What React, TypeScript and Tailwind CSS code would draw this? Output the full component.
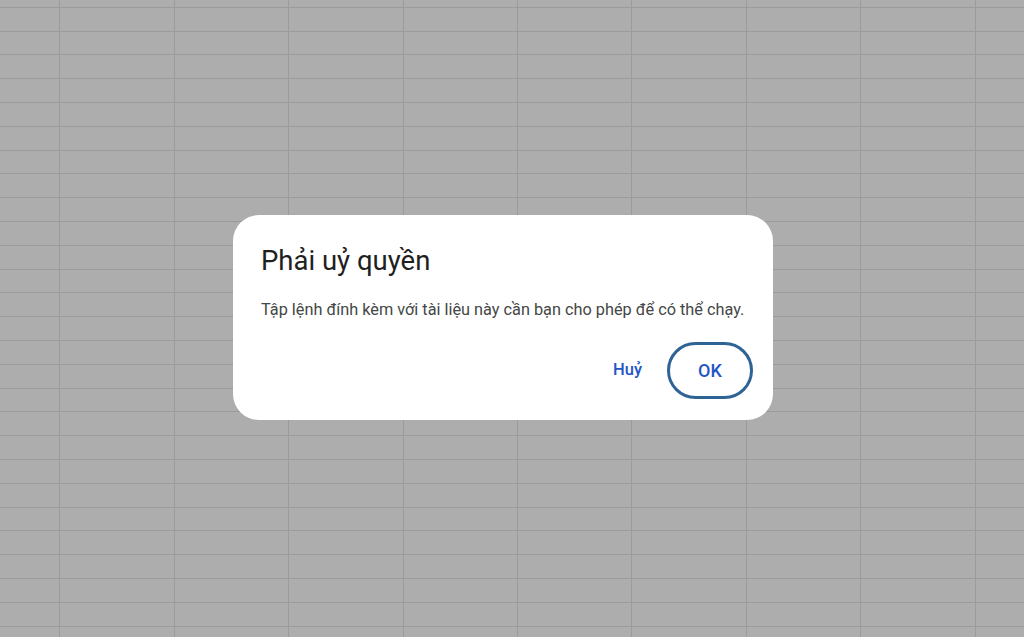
const COLS = 10;
const ROWS = 28;

function SheetGrid() {
  // lưới bảng tính mờ phía sau hộp thoại
  return (
    <div className="absolute inset-0 overflow-hidden bg-[#adadad]">
      <div className="ml-[-54px] mt-[-16px] flex flex-col">
        {Array.from({ length: ROWS }, (_, r) => (
          <div key={r} className="flex h-[23.8px] shrink-0">
            {Array.from({ length: COLS }, (_, c) => (
              <div
                key={c}
                className="h-full w-[114.4px] shrink-0 border-b-[1.5px] border-r-[1.5px] border-[#9b9b9b]"
              />
            ))}
          </div>
        ))}
      </div>
    </div>
  );
}

export default function App() {
  return (
    <div className="relative h-[637px] w-[1024px] overflow-hidden font-['Roboto','Noto_Sans',sans-serif]">
      <SheetGrid />
      <div className="relative h-full w-full pl-[233px] pt-[215px]">
        <div
          role="dialog"
          aria-labelledby="auth-title"
          className="w-[540px] rounded-[26px] bg-white pl-[28px] pr-[20px] pt-[29px] pb-[21px]"
        >
          <h2 id="auth-title" className="text-[27.5px] leading-[34px] text-[#1f1f1f]">
            Phải uỷ quyền
          </h2>
          <p className="mt-[21px] text-[16.3px] leading-[22px] text-[#444746]">
            Tập lệnh đính kèm với tài liệu này cần bạn cho phép để có thể chạy.
          </p>
          <div className="mt-[21px] flex items-center justify-end gap-[25px]">
            <button
              type="button"
              className="text-[16.5px] font-medium text-[#1f56c6] cursor-pointer"
            >
              Huỷ
            </button>
            <button
              type="button"
              className="flex h-[57px] w-[86px] items-center justify-center rounded-full border-[3px] border-[#2e6396] text-[18px] font-medium text-[#1f56c6] cursor-pointer"
            >
              OK
            </button>
          </div>
        </div>
      </div>
    </div>
  );
}
